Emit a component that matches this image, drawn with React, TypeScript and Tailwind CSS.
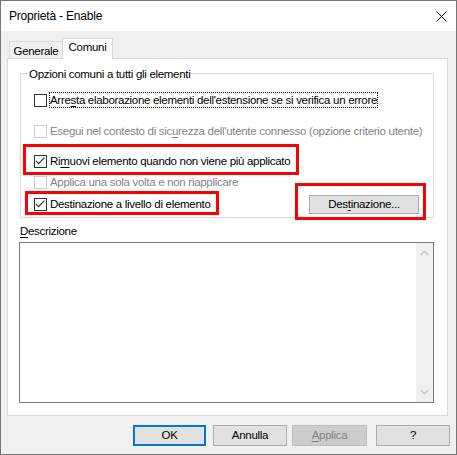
import React from "react";

const Check = ({ checked = false, disabled = false }: { checked?: boolean; disabled?: boolean }) => (
  <span
    className={
      disabled
        ? "w-[13px] h-[13px] shrink-0 border border-[#cccccc] bg-white flex"
        : "w-[13px] h-[13px] shrink-0 border border-[#333333] bg-white flex"
    }
  >
    {checked && (
      <svg width="11" height="11" viewBox="0 0 11 11">
        <path d="M0.8 4.8 L3.6 7.6 L9.4 1.6" fill="none" stroke="#333333" strokeWidth="1.2" />
      </svg>
    )}
  </span>
);

const U = ({ children }: { children: React.ReactNode }) => <span className="underline underline-offset-[2px]">{children}</span>;

export default function App() {
  return (
    <div className="w-[457px] h-[455px] bg-[#f0f0f0] border border-[#767676] flex flex-col font-['Liberation_Sans',Arial,sans-serif] text-[11.5px] tracking-[-0.3px] text-black overflow-hidden">
      {/* Title bar */}
      <div className="h-[30px] bg-white flex items-center justify-between pl-[8px] pr-[9px] shrink-0">
        <span className="text-[12px] leading-[14px] tracking-[-0.2px]">Proprietà - Enable</span>
        <svg width="11" height="11" viewBox="0 0 11 11">
          <path d="M0.5 0.5 L10.5 10.5 M10.5 0.5 L0.5 10.5" stroke="#000" strokeWidth="1" />
        </svg>
      </div>

      {/* Tabs */}
      <div className="flex items-end pl-[8px] pt-[7px] -mb-px relative z-10">
        <div className="h-[18px] w-[53px] border-l border-t border-b border-[#d9d9d9] bg-[#f0f0f0] text-center pt-[2px] leading-[14px]">
          Generale
        </div>
        <div className="h-[21px] w-[51px] border-l border-t border-r border-[#d9d9d9] bg-white text-center pt-[1px] leading-[14px]">
          Comuni
        </div>
      </div>

      {/* Panel */}
      <div className="ml-[6px] w-[441px] border border-[#d9d9d9] bg-white pb-[12px]">
        <div className="relative mt-[14px] ml-[12px] w-[414px] border border-[#dcdcdc] pl-[13px] pr-[14px] pt-[18px] pb-[3px]">
          <span className="absolute top-[-7px] left-[7px] bg-white px-[1px] leading-[14px]">
            Opzioni comuni a tutti gli elementi
          </span>

          <div className="flex items-center h-[16px]">
            <Check />
            <span className="ml-[2px] border border-dotted border-black leading-[14px] whitespace-nowrap">
              Arre<U>s</U>ta elaborazione elementi dell'estensione se si verifica un errore
            </span>
          </div>

          <div className="flex items-center h-[13px] mt-[17px]">
            <Check disabled />
            <span className="ml-[3px] leading-[13px] text-[#838383] whitespace-nowrap">
              Esegui nel contesto di sic<U>u</U>rezza dell'utente connesso (opzione criterio utente)
            </span>
          </div>

          <div className="flex items-center h-[13px] mt-[17px]">
            <Check checked />
            <span className="ml-[3px] leading-[13px] whitespace-nowrap">
              Ri<U>m</U>uovi elemento quando non viene più applicato
            </span>
          </div>

          <div className="flex items-center h-[13px] mt-[8px]">
            <Check disabled />
            <span className="ml-[3px] leading-[13px] text-[#838383] whitespace-nowrap">
              Applica una sola volta e non riapplicare
            </span>
          </div>

          <div className="flex items-center h-[20px] mt-[5px]">
            <Check checked />
            <span className="ml-[3px] leading-[13px] whitespace-nowrap">Destinazione a livello di elemento</span>
            <button className="ml-auto w-[110px] h-[19px] bg-[#e1e1e1] border border-[#adadad] leading-[13px] text-center">
              Des<U>t</U>inazione...
            </button>
          </div>

          {/* red annotation boxes */}
          <div className="absolute left-[2px] top-[70px] w-[276px] h-[31px] border-[3px] border-[#ff0000] pointer-events-none" />
          <div className="absolute left-[4px] top-[117px] w-[194px] h-[24px] border-[3px] border-[#ff0000] pointer-events-none" />
          <div className="absolute left-[274px] top-[109px] w-[131px] h-[37px] border-[3px] border-[#ff0000] pointer-events-none" />
        </div>

        <div className="mt-[7px] ml-[12px] leading-[13px]">
          <U>D</U>escrizione
        </div>

        <div className="mt-[4px] ml-[11px] w-[415px] h-[161px] border border-[#7a7a7a] bg-white flex justify-end">
          <div className="w-[17px] h-full bg-[#f0f0f0] flex flex-col items-center justify-between pt-[7px] pb-[7px]">
            <svg width="9" height="6" viewBox="0 0 9 6">
              <path d="M0.8 5 L4.5 1.3 L8.2 5" fill="none" stroke="#c2c2c2" strokeWidth="1.4" />
            </svg>
            <svg width="9" height="6" viewBox="0 0 9 6">
              <path d="M0.8 1 L4.5 4.7 L8.2 1" fill="none" stroke="#c2c2c2" strokeWidth="1.4" />
            </svg>
          </div>
        </div>
      </div>

      {/* Buttons */}
      <div className="flex mt-[9px] pl-[132px]">
        <button className="w-[73px] h-[21px] bg-[#e1e1e1] border-2 border-[#0078d7] leading-[13px]">OK</button>
        <button className="ml-[7px] w-[74px] h-[21px] bg-[#e1e1e1] border border-[#adadad] leading-[13px]">Annulla</button>
        <button className="ml-[5px] w-[75px] h-[21px] bg-[#cccccc] border border-[#bfbfbf] text-[#838383] leading-[13px]">
          <U>A</U>pplica
        </button>
        <button className="ml-[9px] w-[74px] h-[21px] bg-[#e1e1e1] border border-[#adadad] leading-[13px]">?</button>
      </div>
    </div>
  );
}
